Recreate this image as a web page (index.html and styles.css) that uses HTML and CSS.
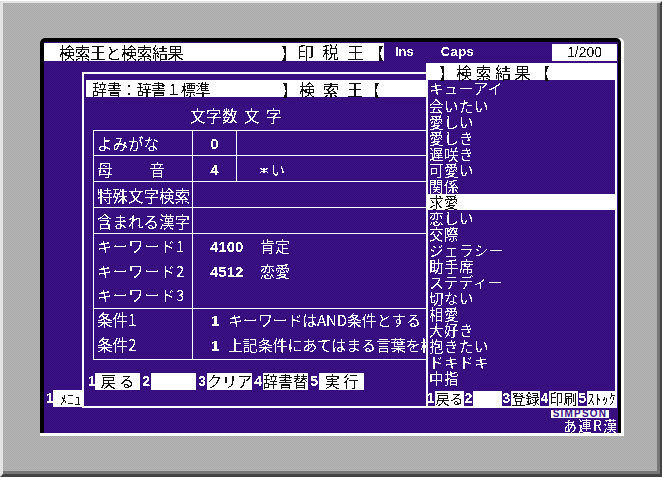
FILE: index.html
```html
<!DOCTYPE html>
<html lang="ja">
<head>
<meta charset="utf-8">
<title>検索王と検索結果</title>
<link rel="stylesheet" href="styles.css">
</head>
<body>
<svg class="defs" aria-hidden="true"><filter id="crisp" x="-5%" y="-5%" width="110%" height="110%" color-interpolation-filters="sRGB"><feComponentTransfer><feFuncA type="discrete" tableValues="0 1"/></feComponentTransfer></filter></svg>
<div class="case">
  <div class="bezel">
    <div class="screen">
      <div class="crt">
        <header class="titlebar">
          <div class="titlebox">
            <span class="px title-name">検索王と検索結果</span>
            <span class="px bracket-l">】</span>
            <span class="px title-app">印税王</span>
            <span class="px bracket-r">【</span>
          </div>
          <span class="px lock lock-ins">Ins</span>
          <span class="px lock lock-caps">Caps</span>
          <div class="pagebox"><span class="px">1/200</span></div>
        </header>

        <div class="bottom">
          <div class="menu-row">
            <span class="px num">1</span>
            <div class="menu-key"><span class="px">ﾒﾆｭｰ</span></div>
          </div>
          <div class="logo-row"><span class="logo">SIMPSON</span></div>
          <div class="status-row"><span class="px">あ連R漢</span></div>
        </div>

        <section class="win">
          <div class="dictbar">
            <span class="px dict-name">辞書：辞書１標準</span>
            <span class="px dict-l">】</span>
            <span class="px dict-app">検索王</span>
            <span class="px dict-r">【</span>
          </div>
          <div class="heading"><span class="px">文字数 文 字</span></div>
          <table class="form">
            <colgroup><col class="c1"><col class="c2"><col class="c3"></colgroup>
            <tr class="r1">
              <td><span class="px lab">よみがな</span></td>
              <td class="mid"><span class="px val">0</span></td>
              <td></td>
            </tr>
            <tr class="r2">
              <td><span class="px lab boin"><span>母</span><span>音</span></span></td>
              <td class="mid"><span class="px val">4</span></td>
              <td><span class="px pat">＊い</span></td>
            </tr>
            <tr class="r2">
              <td><span class="px lab">特殊文字検索</span></td>
              <td colspan="2"></td>
            </tr>
            <tr class="r2">
              <td><span class="px lab">含まれる漢字</span></td>
              <td colspan="2"></td>
            </tr>
            <tr class="r3">
              <td>
                <div class="line"><span class="px lab kw">キーワード1</span></div>
                <div class="line"><span class="px lab kw">キーワード2</span></div>
                <div class="line"><span class="px lab kw">キーワード3</span></div>
              </td>
              <td colspan="2">
                <div class="line"><span class="px val code">4100</span><span class="px word">肯定</span></div>
                <div class="line"><span class="px val code">4512</span><span class="px word">恋愛</span></div>
                <div class="line"></div>
              </td>
            </tr>
            <tr class="r4">
              <td>
                <div class="line"><span class="px lab">条件1</span></div>
                <div class="line"><span class="px lab">条件2</span></div>
              </td>
              <td colspan="2">
                <div class="line"><span class="px val cond">1</span><span class="px cond-text">キーワードはAND条件とする</span></div>
                <div class="line"><span class="px val cond">1</span><span class="px cond-text">上記条件にあてはまる言葉を検索</span></div>
              </td>
            </tr>
          </table>
          <div class="fkeys">
            <div class="fkey"><span class="px num">1</span><div class="key"><span class="px">戻 る</span></div></div>
            <div class="fkey"><span class="px num">2</span><div class="key"></div></div>
            <div class="fkey"><span class="px num">3</span><div class="key"><span class="px">クリア</span></div></div>
            <div class="fkey"><span class="px num">4</span><div class="key"><span class="px">辞書替</span></div></div>
            <div class="fkey"><span class="px num">5</span><div class="key"><span class="px">実 行</span></div></div>
          </div>
        </section>

        <aside class="results">
          <div class="results-head">
            <span class="px res-l">】</span>
            <span class="px res-title">検索結果</span>
            <span class="px res-r">【</span>
          </div>
          <div class="results-body">
            <ul class="list">
              <li class="first"><span class="px">キューアイ</span></li>
              <li><span class="px">会いたい</span></li>
              <li><span class="px">愛しい</span></li>
              <li><span class="px">愛しき</span></li>
              <li><span class="px">遅咲き</span></li>
              <li><span class="px">可愛い</span></li>
              <li><span class="px">関係</span></li>
              <li class="sel"><span class="px">求愛</span></li>
              <li><span class="px">恋しい</span></li>
              <li><span class="px">交際</span></li>
              <li><span class="px">ジェラシー</span></li>
              <li><span class="px">助手席</span></li>
              <li><span class="px">ステディー</span></li>
              <li><span class="px">切ない</span></li>
              <li><span class="px">相愛</span></li>
              <li><span class="px">大好き</span></li>
              <li><span class="px">抱きたい</span></li>
              <li><span class="px">ドキドキ</span></li>
              <li><span class="px">中指</span></li>
            </ul>
            <div class="rkeys">
              <div class="rkey"><span class="px num">1</span><div class="key"><span class="px">戻る</span></div></div>
              <div class="rkey"><span class="px num">2</span><div class="key"></div></div>
              <div class="rkey"><span class="px num">3</span><div class="key"><span class="px">登録</span></div></div>
              <div class="rkey"><span class="px num">4</span><div class="key"><span class="px">印刷</span></div></div>
              <div class="rkey"><span class="px num">5</span><div class="key"><span class="px tiny">ｽﾄｯｸ</span></div></div>
            </div>
          </div>
        </aside>
      </div>
    </div>
  </div>
</div>
</body>
</html>
```
FILE: styles.css
```css
:root {
  --violet: repeating-conic-gradient(#3c1086 0 25%, #330e78 0 50%) 0 0 / 2px 2px;
  --grey: repeating-conic-gradient(#b6b6b6 0 25%, #a9a9a9 0 50%) 0 0 / 2px 2px;
}
* { box-sizing: border-box; }
html, body { margin: 0; padding: 0; background: #fff; }
body {
  width: 662px;
  height: 477px;
  overflow: hidden;
  font-family: "Noto Sans CJK JP", "Liberation Sans", sans-serif;
  font-size: 16px;
  line-height: 16px;
  color: #fff;
}
.defs { position: absolute; width: 0; height: 0; }
.px { filter: url(#crisp); display: inline-block; white-space: nowrap; }

.case {
  width: 662px;
  height: 476px;
  margin-top: 1px;
  border-style: solid;
  border-width: 2px 2px 3px 3px;
  border-color: #e4e4e4 #444 #444 #e4e4e4;
}
.bezel {
  height: 100%;
  padding: 35px 0 0 37px;
  background: var(--grey);
  border-right: 3px solid #777;
  border-bottom: 3px solid #777;
}
.screen {
  width: 584px;
  height: 398px;
  background: #fff;
  padding: 0 3px 3px 0;
  border-radius: 5px 5px 0 0;
}
.crt {
  position: relative;
  height: 100%;
  display: flex;
  flex-direction: column;
  justify-content: space-between;
  background: var(--violet);
  border-style: solid;
  border-width: 4px 3px 0 4px;
  border-color: #000;
  border-radius: 5px 5px 0 0;
}

/* title bar */
.titlebar {
  display: flex;
  align-items: center;
  height: 18px;
  margin-top: 1px;
  flex: none;
}
.titlebox {
  display: flex;
  align-items: center;
  width: 340px;
  height: 18px;
  background: #fff;
  color: #111;
  padding-left: 15px;
}
.title-name { width: 222px; letter-spacing: -0.5px; }
.bracket-l { width: 16px; font-weight: 700; }
.title-app { width: 76px; letter-spacing: 8px; font-size: 17px; }
.bracket-r { width: 9px; font-weight: 700; margin-left: -5px; }
.lock {
  font-family: "Liberation Sans", sans-serif;
  font-weight: 700;
  font-size: 13px;
}
.lock-ins { margin-left: 11px; }
.lock-caps { margin-left: 27px; letter-spacing: 0.4px; }
.pagebox {
  margin: 0 1px 0 auto;
  width: 65px;
  height: 17px;
  background: #fff;
  color: #111;
  font-family: "Liberation Sans", sans-serif;
  font-size: 14px;
  text-align: center;
}

/* bottom strip */
.bottom { flex: none; }
.menu-row {
  display: flex;
  align-items: center;
  height: 17px;
  padding-left: 2px;
}
.menu-row .num { width: 7px; }
.menu-key {
  width: 36px;
  height: 17px;
  background: #fff;
  color: #111;
  font-size: 14px;
  padding-left: 7px;
  white-space: nowrap;
}
.logo-row {
  display: flex;
  justify-content: flex-end;
  height: 8px;
  margin-top: 3px;
  padding-right: 9px;
}
.logo {
  width: 58px;
  height: 8px;
  background: #fff;
  color: #3c1086;
  font-family: "Liberation Sans", sans-serif;
  font-weight: 700;
  font-size: 10px;
  line-height: 8px;
  letter-spacing: 1.2px;
  text-align: center;
  white-space: nowrap;
}
.status-row {
  height: 15px;
  text-align: right;
  font-size: 14px;
  letter-spacing: 1px;
  line-height: 15px;
}

.num {
  font-family: "Liberation Sans", sans-serif;
  font-weight: 700;
  font-size: 14px;
  line-height: 17px;
}

/* dictionary window */
.win {
  position: absolute;
  left: 38px;
  top: 30px;
  width: 346px;
  height: 336px;
  border: solid #fff;
  border-width: 2px 0 2px 2px;
  background: var(--violet);
}
.dictbar {
  display: flex;
  align-items: center;
  height: 17px;
  margin: 6px 0 0 2px;
  background: #fff;
  color: #111;
  padding-left: 6px;
  font-size: 15px;
}
.dict-name { width: 190px; letter-spacing: -0.2px; }
.dict-l { width: 17px; font-weight: 700; font-size: 16px; }
.dict-app { width: 74px; letter-spacing: 8px; font-size: 16px; }
.dict-r { width: 9px; font-weight: 700; font-size: 16px; margin-left: -9px; }
.heading {
  height: 33px;
  padding: 10px 0 0 106px;
  font-size: 15.5px;
  letter-spacing: 0.5px;
  word-spacing: 2px;
}
.form {
  border-collapse: collapse;
  table-layout: fixed;
  width: 336px;
  margin-left: 9px;
}
.form td {
  border: 1px solid #fff;
  padding: 0;
  vertical-align: middle;
  overflow: hidden;
}
.c1 { width: 99px; }
.c2 { width: 44px; }
.r1 { height: 25px; }
.r2 { height: 26px; }
.r3 { height: 74px; }
.r4 { height: 51px; }
.lab { padding-left: 3px; font-size: 15.5px; }
.kw { letter-spacing: 0.8px; font-size: 15px; }
.boin { display: inline-flex; width: 71px; justify-content: space-between; }
.mid { text-align: center; }
.val {
  font-family: "Liberation Sans", sans-serif;
  font-weight: 700;
  font-size: 15px;
}
.pat { padding-left: 20px; font-size: 14px; }
.line { height: 24.5px; line-height: 22px; white-space: nowrap; }
.r4 .line { line-height: 21px; }
.code { margin-left: 17px; width: 50px; }
.word { font-size: 15px; }
.cond { margin-left: 18px; width: 17px; }
.cond-text { font-size: 15px; letter-spacing: -0.15px; }

.fkeys {
  display: flex;
  margin: 13px 0 0 4px;
}
.fkey { display: flex; width: 56px; }
.fkey .num { width: 11px; text-align: right; padding-right: 1px; }
.fkey:first-child { width: 52px; }
.fkey:first-child .num { width: 7px; }
.key {
  flex: none;
  width: 45px;
  height: 17px;
  background: #fff;
  color: #111;
  text-align: center;
  font-size: 15px;
  line-height: 15px;
}

/* results window */
.results {
  position: absolute;
  left: 382px;
  top: 21px;
  width: 191px;
  height: 345px;
  background: #fff;
  display: flex;
  flex-direction: column;
  padding-bottom: 2px;
}
.results-head {
  display: flex;
  align-items: center;
  height: 17px;
  flex: none;
  color: #111;
  padding-left: 13px;
}
.res-l { width: 17px; font-weight: 700; }
.res-title { width: 78px; letter-spacing: 3.5px; }
.res-r { width: 16px; font-weight: 700; }
.results-body {
  flex: 1;
  margin: 0 2px;
  background: var(--violet);
  display: flex;
  flex-direction: column;
  justify-content: space-between;
}
.list { list-style: none; margin: 0; padding: 0; }
.list li {
  height: 16px;
  padding-left: 1px;
  line-height: 15px;
  font-size: 14.5px;
  letter-spacing: 0.5px;
}
.list .first { height: 18px; }
.list .sel { background: #fff; color: #111; margin-right: -2px; }
.rkeys { display: flex; margin-left: -2px; margin-right: -2px; }
.rkey { display: flex; width: 38px; height: 15px; }
.rkey .num { width: 9px; text-align: center; line-height: 15px; }
.rkey .key { width: 29px; height: 15px; line-height: 14px; font-size: 14px; }
.rkey .tiny { font-size: 14px; letter-spacing: 0; }
```
